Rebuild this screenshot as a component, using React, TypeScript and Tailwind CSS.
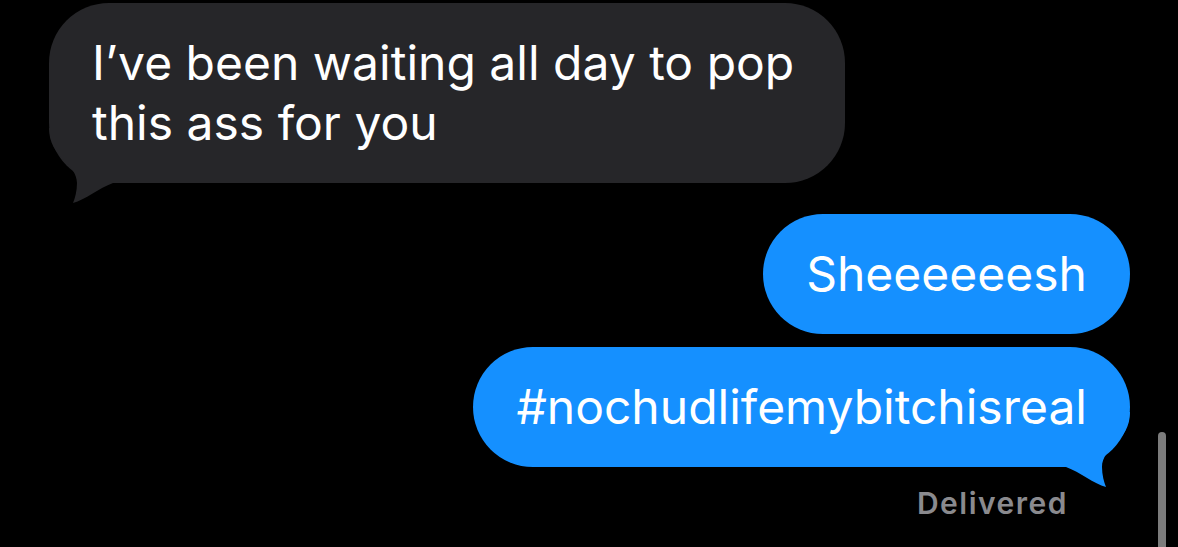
import type { ReactNode } from "react";

type Side = "in" | "out";

// Bubble tail drawn for the right side; mirrored for incoming messages.
function Tail({ side, color }: { side: Side; color: string }) {
  return (
    <svg
      width="64"
      height="75"
      viewBox="0 0 64 75"
      className={`absolute bottom-[-20px] ${side === "out" ? "right-0 -scale-x-100" : "left-0"}`}
      aria-hidden
    >
      <path
        d="M0 0 C0 30 28 35 28 55 C28 63 26 70 24 75 C36 72 50 60 64 55 L64 0 Z"
        fill={color}
      />
    </svg>
  );
}

function Bubble({ side, children, tail = false }: { side: Side; children: ReactNode; tail?: boolean }) {
  const color = side === "out" ? "#1590ff" : "#262629";
  return (
    <div
      className={`relative rounded-[60px] px-[43px] py-[30px] text-[48px] leading-[60px] text-white ${
        side === "out" ? "self-end bg-[#1590ff]" : "self-start bg-[#262629]"
      }`}
    >
      {tail && <Tail side={side} color={color} />}
      <span className="relative">{children}</span>
    </div>
  );
}

export default function App() {
  return (
    <div
      className="relative h-[547px] w-full overflow-hidden bg-black"
      style={{ fontFamily: "Inter, 'Noto Sans', sans-serif" }}
    >
      <div className="flex flex-col pl-[49px] pr-[48px] pt-[3px]">
        <div className="w-[796px]">
          <Bubble side="in" tail>
            I’ve been waiting all day to pop
            <br />
            this ass for you
          </Bubble>
        </div>

        <div className="mt-[31px] flex flex-col gap-[13px]">
          <Bubble side="out">Sheeeeeesh</Bubble>
          <Bubble side="out" tail>
            #nochudlifemybitchisreal
          </Bubble>
        </div>

        <p className="mt-[16px] self-end pr-[62px] text-[30px] font-semibold leading-[40px] tracking-[0.05em] text-[#8a8a8e]">
          Delivered
        </p>
      </div>

      {/* scroll indicator */}
      <div className="absolute right-[12px] top-[432px] h-[130px] w-[8px] rounded-full bg-[#7c7c7c]" />
    </div>
  );
}
